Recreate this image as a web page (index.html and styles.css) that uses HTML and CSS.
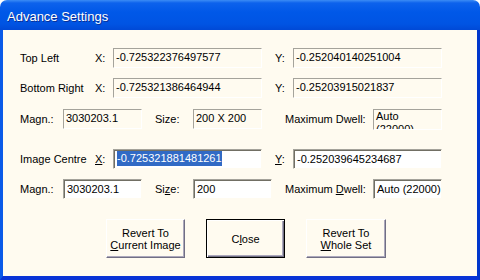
FILE: index.html
```html
<!DOCTYPE html>
<html lang="en">

<head>
    <meta charset="UTF-8" />
    <title>Advance Settings</title>
    <link rel="stylesheet" href="styles.css">
</head>

<body>
    <div class="ventana">
        <div class="barra-titulo">Advance Settings</div>
        <div class="dialogo">
            <div class="fila fila-1">
                <span class="etiqueta ancho-nombre">Top Left</span>
                <span class="etiqueta ancho-eje">X:</span>
                <div class="campo campo-lectura ancho-coord">-0.725322376497577</div>
                <span class="etiqueta ancho-eje sep-y">Y:</span>
                <div class="campo campo-lectura ancho-coord">-0.252040140251004</div>
            </div>

            <div class="fila fila-2">
                <span class="etiqueta ancho-nombre">Bottom Right</span>
                <span class="etiqueta ancho-eje">X:</span>
                <div class="campo campo-lectura ancho-coord">-0.725321386464944</div>
                <span class="etiqueta ancho-eje sep-y">Y:</span>
                <div class="campo campo-lectura ancho-coord">-0.25203915021837</div>
            </div>

            <div class="fila fila-3">
                <span class="etiqueta ancho-magn">Magn.:</span>
                <div class="campo campo-lectura ancho-medio">3030203.1</div>
                <span class="etiqueta ancho-size sep-13">Size:</span>
                <div class="campo campo-lectura ancho-corto">200 X 200</div>
                <span class="etiqueta ancho-dwell sep-23">Maximum Dwell:</span>
                <div class="campo campo-lectura ancho-corto campo-dwell">Auto<br>(22000)</div>
            </div>

            <div class="fila fila-4">
                <span class="etiqueta ancho-nombre">Image Centre</span>
                <span class="etiqueta ancho-eje"><u>X</u>:</span>
                <div class="campo campo-edicion ancho-coord"><span class="seleccion">-0.725321881481261</span></div>
                <span class="etiqueta ancho-eje sep-y"><u>Y</u>:</span>
                <div class="campo campo-edicion ancho-coord">-0.252039645234687</div>
            </div>

            <div class="fila fila-5">
                <span class="etiqueta ancho-magn">Magn.:</span>
                <div class="campo campo-edicion ancho-medio">3030203.1</div>
                <span class="etiqueta ancho-size sep-13">Si<u>z</u>e:</span>
                <div class="campo campo-edicion ancho-medio">200</div>
                <span class="etiqueta ancho-dwell sep-13">Maximum <u>D</u>well:</span>
                <div class="campo campo-edicion ancho-corto">Auto (22000)</div>
            </div>

            <div class="grupo-botones">
                <button class="boton">Revert To<br><u>C</u>urrent Image</button>
                <button class="boton boton-defecto">C<u>l</u>ose</button>
                <button class="boton boton-ancho">Revert To<br><u>W</u>hole Set</button>
            </div>
        </div>
    </div>
</body>

</html>
```

FILE: styles.css
```css
html,
body {
    margin: 0;
    padding: 0;
}

body {
    width: 480px;
    height: 280px;
    overflow: hidden;
    background-color: white;
    font-family: "Liberation Sans", Arial, sans-serif;
    font-size: 11px;
    color: #000;
}

.ventana {
    width: 480px;
    height: 280px;
    display: flex;
    flex-direction: column;
    border-radius: 7px 7px 0 0;
    overflow: hidden;
}

.barra-titulo {
    flex: none;
    height: 30px;
    box-sizing: border-box;
    padding: 3px 0 0 7px;
    line-height: 27px;
    font-size: 13px;
    color: white;
    text-shadow: 1px 1px #0b2f93;
    background: linear-gradient(to bottom, #3b8cf5 0, #0d62ec 3px, #0058e8 12px, #0054e3 24px, #0049d6 30px);
}

.dialogo {
    flex: 1;
    background-color: #fffbf0;
    border-style: solid;
    border-width: 0 3px 4px 3px;
    border-color: #0055e5 #0036cc #0833d6 #0a5ae8;
    padding: 18px 0 0 17px;
}

.fila {
    display: flex;
    align-items: flex-start;
    height: 20px;
}

.fila-2 {
    margin-top: 10px;
}

.fila-3 {
    margin-top: 11px;
}

.fila-4 {
    margin-top: 20px;
}

.fila-5 {
    margin-top: 10px;
}

.etiqueta {
    flex: none;
    line-height: 20px;
    white-space: nowrap;
}

.ancho-nombre {
    width: 75px;
}

.ancho-eje {
    width: 18px;
}

.ancho-magn {
    width: 43px;
}

.ancho-size {
    width: 38px;
}

.ancho-dwell {
    width: 88px;
}

.sep-y,
.sep-13 {
    margin-left: 13px;
}

.sep-23 {
    margin-left: 23px;
}

.campo {
    flex: none;
    box-sizing: border-box;
    height: 20px;
    padding-left: 2px;
    line-height: 17px;
    white-space: nowrap;
    overflow: hidden;
    border: 1px solid;
}

.campo-lectura {
    background-color: transparent;
    border-color: #a5a39b #ffffff #ffffff #a5a39b;
}

.campo-edicion {
    background-color: white;
    border-color: #a5a39b #fffbf0 #fffbf0 #a5a39b;
    box-shadow: inset 1px 1px 0 #716f64;
    padding-left: 3px;
    line-height: 18px;
}

.campo-dwell {
    height: 21px;
    line-height: 13px;
}

.ancho-coord {
    width: 149px;
}

.ancho-medio {
    width: 79px;
}

.ancho-corto {
    width: 69px;
}

.seleccion {
    display: inline-block;
    line-height: 15px;
    margin-top: 1px;
    vertical-align: top;
    background-color: #316ac5;
    color: white;
}

.grupo-botones {
    display: flex;
    gap: 21px;
    margin: 20px 0 0 86px;
}

.boton {
    width: 79px;
    height: 39px;
    padding: 0;
    font-family: "Liberation Sans", Arial, sans-serif;
    font-size: 11px;
    line-height: 12px;
    color: #000;
    background-color: #fffbf0;
    border: 1px solid;
    border-color: #ffffff #716f84 #716f84 #ffffff;
    box-shadow: inset -1px -1px 0 #aca8bc;
}

.boton-ancho {
    width: 80px;
}

.boton-defecto {
    border-color: #000;
    box-shadow: inset 1px 1px 0 #fff, inset -1px -1px 0 #716f84, inset -2px -2px 0 #aca8bc;
}
```
